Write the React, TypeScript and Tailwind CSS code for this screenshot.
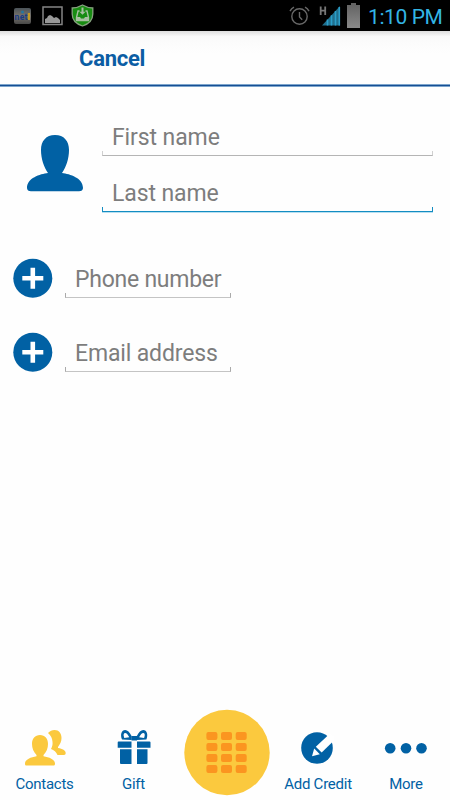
import React from "react";

function StatusBar() {
  return (
    <div className="flex h-[31px] shrink-0 items-center justify-between bg-black pl-[14px] pr-[8px]">
      <div className="flex h-full items-center">
        <svg width="17" height="18" viewBox="0 0 17 18">
          <defs>
            <linearGradient id="appTile" x1="0" y1="0" x2="0" y2="1">
              <stop offset="0" stopColor="#4b5358" />
              <stop offset=".5" stopColor="#77736c" />
              <stop offset="1" stopColor="#484848" />
            </linearGradient>
          </defs>
          <rect x="0" y="1" width="17" height="16" rx="2" fill="url(#appTile)" />
          <circle cx="8.5" cy="5" r="1.5" fill="#2377a3" />
          <text x="0.5" y="13" fontSize="8.5" fontWeight="bold" fontFamily="Roboto, sans-serif" fill="#173b85" textLength="13">net</text>
          <rect x="14" y="6" width="2" height="7" fill="#c39a25" />
        </svg>
        <svg className="ml-[11px]" width="21" height="20" viewBox="0 0 21 20">
          <rect x="1" y="1" width="19" height="17.5" fill="none" stroke="#858585" strokeWidth="1.5" />
          <path d="M3 17v-4l2-1 1-2 2-1 2 1 2 2 2-1 2 1 2 2v3z" fill="#999" />
        </svg>
        <svg className="ml-[8px]" width="23" height="23" viewBox="0 0 23 23">
          <path d="M11.5 1C8 3 5 4 1.2 4v6c0 6 4 10 10.3 12 6.3-2 10.3-6 10.3-12V4C18 4 15 3 11.5 1z" fill="#188c12" stroke="#86a27e" strokeWidth="1.3" />
          <path d="M8.5 7H7l-1.5 6.5v3h12v-3L16 7h-1.5" fill="none" stroke="#a7bfa0" strokeWidth="1.4" />
          <path d="M5.5 13H9l1 1.5h3l1-1.5h3.5v3.5h-12zM10.5 3.5h2v4.200h2l-3 3-3-3h2z" fill="#a7bfa0" />
        </svg>
      </div>
      <div className="flex h-full items-center">
        <svg width="21" height="20" viewBox="0 0 21 20" fill="none" stroke="#686868" strokeWidth="1.4">
          <circle cx="10.5" cy="10.5" r="7.7" />
          <path d="M10.5 6v5l2.7 2.7M1 5.2C2 3.3 3.3 2.1 5 1.2M20 5.2c-1-1.9-2.3-3.1-4-4" />
        </svg>
        <svg className="ml-[9px]" width="22" height="22" viewBox="0 0 22 22">
          <path d="M1.7 1.5v8.5M6.2 1.5v8.5M1.2 5.7h5" stroke="#777" strokeWidth="1.8" />
          <path d="M3 20.5L21 1v19.5z" fill="#206f8d" />
          <path d="M8.5 14.5v6M12.5 10.3v10.2M16.5 6v14.5M20.3 2v18.5" stroke="#2b9dc8" strokeWidth="1.6" />
        </svg>
        <svg className="ml-[6px]" width="13" height="25" viewBox="0 0 13 25">
          <defs>
            <linearGradient id="battery" x1="0" y1="0" x2="0" y2="1">
              <stop offset="0" stopColor="#626262" />
              <stop offset="1" stopColor="#898989" />
            </linearGradient>
          </defs>
          <path d="M4 0h5v2h4v23H0V2h4z" fill="url(#battery)" />
        </svg>
        <span className="ml-[8px] mt-[2px] w-[74px] whitespace-nowrap text-[21px] leading-[24px] tracking-[-0.4px] text-[#33b5e5]">1:10 PM</span>
      </div>
    </div>
  );
}

function FieldLine({ active = false, small = false }: { active?: boolean; small?: boolean }) {
  if (active) {
    return <div className="h-[5px] border-x border-b border-[#148dc2] shadow-[0_1px_0_#b8dff0]" />;
  }
  return <div className={`h-[5px] border-x border-b ${small ? "border-[#aaa] border-b-[#c4c4c4]" : "border-[#d0d0d0] border-b-[#b5b5b5]"}`} />;
}

function Field({ label, active, small, tracking }: { label: string; active?: boolean; small?: boolean; tracking: string }) {
  return (
    <div className={small ? "w-[166px]" : "w-[331px]"}>
      <div className={`h-[28px] whitespace-nowrap pl-[10px] text-[23px] leading-[29px] text-[#7d7d7d] ${tracking}`}>{label}</div>
      <FieldLine active={active} small={small} />
    </div>
  );
}

function PlusButton() {
  return (
    <svg className="shrink-0" width="40" height="40" viewBox="0 0 40 40">
      <circle cx="19.8" cy="20.2" r="19.5" fill="#0161a4" />
      <path d="M19.8 9.7v21M9.3 20.200h21" stroke="#fff" strokeWidth="4.6" />
    </svg>
  );
}

function BottomNav() {
  return (
    <nav className="flex h-[92px] shrink-0 items-start text-[15px] leading-[18px] tracking-[-0.25px] text-[#0161a4]">
      <div className="flex w-[89px] flex-col items-center pt-[21px]">
        <svg width="44" height="38" viewBox="0 0 44 38" fill="#fbc93e">
          <path d="M25 4C27 2 29 1 31.500 1c4.500 0 7 3.500 7 8 0 3.500-1.300 6-3.500 9v1c4.500.5 7.700 2.500 7.700 5 0 1.300-.6 2-1.700 2h-6.500c-1.200-3-3.500-4.700-6.500-6 1.300-2.300 1.800-4.500 1.500-7-.3-4-1.500-6.500-4.500-9z" />
          <path d="M17 6c5 0 8 3.500 8 9 0 4-1.500 8-4.500 11v1.200C26 28 32 30.500 32 34.500c0 1.500-.5 2-1.500 2h-27c-1.200 0-1.500-.5-1.500-2C2 30.500 8 28 13.500 27.200V26C10.500 23 9 19 9 15c0-5.500 3-9 8-9z" />
        </svg>
        <span className="mt-[8px]">Contacts</span>
      </div>
      <div className="flex w-[89px] flex-col items-center pt-[21px]">
        <svg width="34" height="38" viewBox="0 0 34 38" fill="#0161a4">
          <path d="M1.5 12.500h13V18.700H.7v-5.200q0-1 .8-1zM20 12.500h12.500q1 0 1 1v5.200H20zM3 20.200h11.500V35H4q-1 0-1-1zM20 20.200h10.500V34q0 1-1 1H20z" />
          <path fillRule="evenodd" d="M14.700 7.200C12.500 3 10.500 1 8.200 1 4.500 1 3 5.500 5 10.600l9.700.4zM12.300 8.300l-5 .7C6 5.800 6.700 4 8.200 4c1.300 0 2.600 1.500 4.100 4.300z" />
          <path fillRule="evenodd" d="M19.700 7.200C21.900 3 23.900 1 26.200 1c3.700 0 5.200 4.500 3.200 9.600l-9.700.4zM22.100 8.300l5 .7C28.400 5.800 27.700 4 26.200 4c-1.300 0-2.600 1.500-4.100 4.300z" />
          <path d="M14.500 7h5.500v4.500h-5.500z" />
        </svg>
        <span className="mt-[8px]">Gift</span>
      </div>
      <div className="flex w-[97px] justify-center pt-[1px]">
        <svg width="86" height="87" viewBox="0 0 86 87">
          <circle cx="43" cy="43.5" r="42.7" fill="#fbc93e" />
          {[23, 34, 45, 56].map((y) =>
            [22.4, 37, 51.7].map((x) => (
              <rect key={`${x}-${y}`} x={x} y={y} width="11" height="8" rx="2" fill="#fb9520" />
            )),
          )}
        </svg>
      </div>
      <div className="flex w-[86px] flex-col items-center pt-[21px]">
        <svg className="mr-[3px]" width="34" height="38" viewBox="0 0 34 38">
          <circle cx="17" cy="19" r="15.8" fill="#0161a4" />
          <path d="M30 4.500L15.800 17.700l5.900 5.900L36 9.500z" fill="#fff" />
          <path d="M14.200 19.600L12 27.300l7.800-2.100z" fill="#fff" />
        </svg>
        <span className="mt-[8px] whitespace-nowrap">Add Credit</span>
      </div>
      <div className="flex w-[89px] flex-col items-center pt-[21px] pl-[1px]">
        <svg width="44" height="38" viewBox="0 0 44 38" fill="#0161a4">
          <circle cx="6.2" cy="19.3" r="5.3" />
          <circle cx="22" cy="19.3" r="5.3" />
          <circle cx="37.5" cy="19.3" r="5.3" />
        </svg>
        <span className="mt-[8px]">More</span>
      </div>
    </nav>
  );
}

export default function App() {
  return (
    <div className="flex h-[800px] w-[450px] flex-col overflow-hidden bg-[#fefefe] font-[Roboto,sans-serif]">
      <StatusBar />
      <header className="flex h-[56px] shrink-0 flex-col bg-linear-to-b from-[#dedede] via-[#fafafa] via-10% to-[#fefefe] to-40%">
        <div className="h-[53px] pl-[79px] pt-[15px] text-[22px] font-bold leading-[26px] tracking-[-0.25px] text-[#0b5da4]">Cancel</div>
        <div className="h-[3px] border-y border-[#7da5cc] bg-[#164f94]" />
      </header>
      <main className="flex grow flex-col pt-[36px]">
        <div className="flex pl-[26px]">
          <svg className="mt-[12px] shrink-0" width="58" height="58" viewBox="0 0 58 58" fill="#0161a4">
            <path d="M29 0c9 0 14 6 14 15 0 9-3 17-7 23 8 1 21 5 21 15 0 2-1.5 3.3-4 3.3H5c-2.5 0-4-1.3-4-3.3 0-10 13-14 21-15-4-6-7-14-7-23C15 6 20 0 29 0z" />
          </svg>
          <div className="ml-[18px] flex flex-col gap-[23px]">
            <Field label="First name" tracking="tracking-[-0.1px]" />
            <Field label="Last name" active tracking="tracking-[-0.1px]" />
          </div>
        </div>
        <div className="mt-[46px] flex gap-[12px] pl-[13px]">
          <PlusButton />
          <div className="pt-[7px]"><Field label="Phone number" small tracking="tracking-[-0.25px]" /></div>
        </div>
        <div className="mt-[34px] flex gap-[12px] pl-[13px]">
          <PlusButton />
          <div className="pt-[7px]"><Field label="Email address" small tracking="tracking-[-0.15px]" /></div>
        </div>
      </main>
      <BottomNav />
    </div>
  );
}
